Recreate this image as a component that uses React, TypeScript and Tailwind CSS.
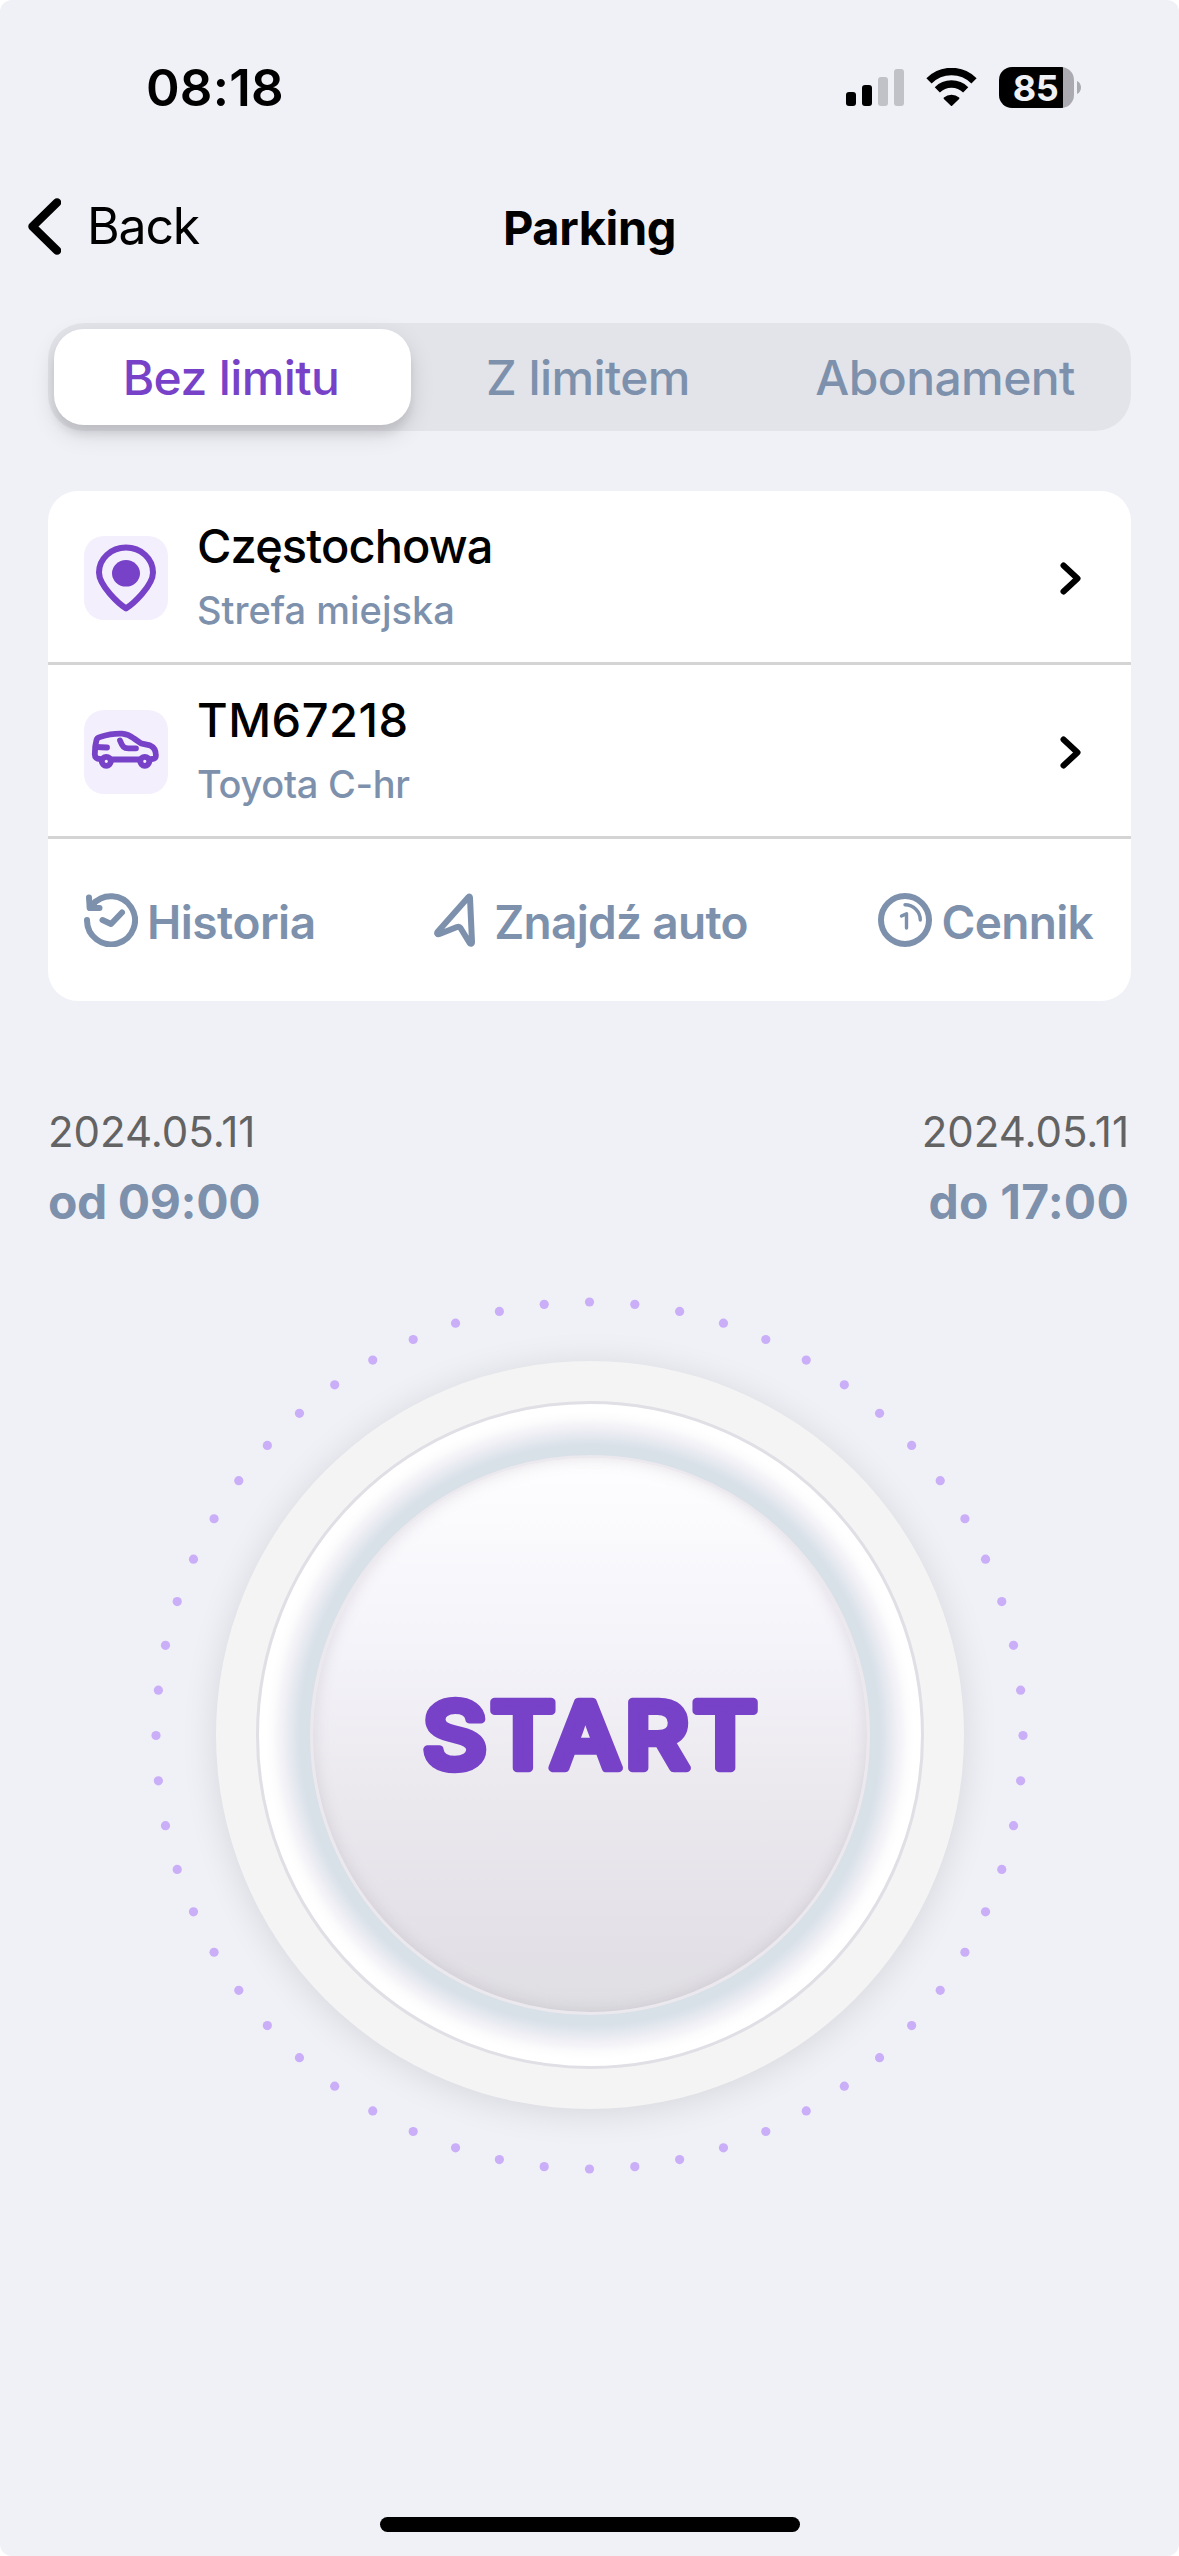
import { useState } from 'react';

const TABS = ['Bez limitu', 'Z limitem', 'Abonament'];

const TAB_CLASSES = [
  'w-[357px]',
  'flex-1',
  'w-[357px]',
];

const DOTS = Array.from({ length: 60 }, (_, i) => {
  const angle = (i * 6 * Math.PI) / 180;
  return { x: 439.5 + 433.5 * Math.sin(angle), y: 440.5 - 433.5 * Math.cos(angle) };
});

function StatusBar() {
  return (
    <div className="flex h-[134px] items-start justify-between pl-[146px] pr-[98px]">
      <span className="mt-[57px] text-[51px] leading-[61px] font-semibold tracking-[0.2px]">08:18</span>
      <div className="mt-[67px] flex h-[41px] items-start">
        <svg className="mt-[2px] h-[37px] w-[58px]" viewBox="0 0 58 37">
          <rect x="0" y="23" width="10" height="14" rx="3" />
          <rect x="16" y="16" width="10" height="21" rx="3" />
          <rect x="32" y="8" width="10" height="29" rx="3" fill="#c1c2c7" />
          <rect x="48" y="0" width="10" height="37" rx="3" fill="#c1c2c7" />
        </svg>
        <svg className="mt-[1px] ml-[22px] h-[38px] w-[51px]" viewBox="0 0 51 38">
          <path d="M3 12.8A31.8 31.8 0 0 1 48 12.8" fill="none" stroke="#000" strokeWidth="7.4" />
          <path d="M11.3 21.8A20.4 20.4 0 0 1 39.7 21.8" fill="none" stroke="#000" strokeWidth="7.4" />
          <path d="M17.9 29.6a11.2 11.2 0 0 1 15.2 0c.4.4.4.9 0 1.3l-7 6.8c-.4.4-.8.4-1.2 0l-7-6.8c-.4-.4-.4-.9 0-1.3z" />
        </svg>
        <div className="ml-[22px] flex h-[41px] w-[75px] items-center rounded-[13px] bg-[linear-gradient(to_right,#000_64px,#aaaab0_64px)]">
          <span className="w-[73px] text-center text-[36px] leading-[44px] font-bold tracking-[-0.5px] text-[#f0f1f6]">85</span>
        </div>
        <svg className="mt-[14px] ml-[3px] h-[13px] w-[4px]" viewBox="0 0 4 13">
          <path d="M0 0c2.500 1 4 3.600 4 6.500S2.500 12 0 13z" fill="#aaaab0" />
        </svg>
      </div>
    </div>
  );
}

function Chevron() {
  return (
    <svg className="mt-[4px] h-[33px] w-[21px]" viewBox="0 0 21 33" fill="none" stroke="#000" strokeWidth="6" strokeLinecap="round" strokeLinejoin="round">
      <path d="M3.500 3.500 17.500 16.500 3.500 29.500" />
    </svg>
  );
}

function PinIcon() {
  return (
    <svg className="h-[84px] w-[84px]" viewBox="0 0 84 84">
      <path d="M42 72.400C35.500 68.500 15 50 15 36.600a27 25 0 0 1 54 0C69 50 48.500 68.500 42 72.400z" fill="none" stroke="#7742c8" strokeWidth="6" strokeLinejoin="round" />
      <ellipse cx="42" cy="37.300" rx="14" ry="13.300" fill="#7742c8" />
    </svg>
  );
}

function CarIcon() {
  return (
    <svg className="h-[84px] w-[84px]" viewBox="0 0 84 84" fill="none" stroke="#7742c8" strokeWidth="5.800" strokeLinecap="round" strokeLinejoin="round">
      <path d="M16 49C12.500 49 10.800 47.500 10.800 44.500L11.200 36.500 12.500 30C13 28 14 27.500 16 27 24 24.500 31 23.400 38 23.700 43 24 46 25.500 50 28.500L57 33.300 66 35.300C70 37 71.900 40 71.900 45.500 71.900 47.500 71 48.700 68 49" />
      <path d="M28 49.500H55" />
      <path d="M12 37 23 37.500" />
      <path d="M36 30.500C38.500 37 40 38.300 44.500 38.300H52" />
      <circle cx="22.300" cy="51.300" r="4.500" />
      <circle cx="60.800" cy="51.300" r="4.500" />
    </svg>
  );
}

function HistoryIcon() {
  return (
    <svg className="h-[54px] w-[54px]" viewBox="0 0 54 54" fill="none" stroke="#7d91ad" strokeWidth="6" strokeLinecap="round" strokeLinejoin="round">
      <path d="M3 27A24 24 0 1 0 8.500 12" />
      <path d="M5 4.500 5.700 15H15.500" />
      <path d="M6 14 11 9" />
      <path d="M18.500 27 27 31 38 19.500" />
    </svg>
  );
}

function FindIcon() {
  return (
    <svg className="h-[54px] w-[42px]" viewBox="0 0 42 54" fill="none" stroke="#7d91ad" strokeWidth="6" strokeLinecap="round" strokeLinejoin="round">
      <path d="M34.500 4C35.500 3 36 3.500 36 5L38 49C38 51 36.500 51.500 35.500 49.700L26.500 35C25.500 33.500 24.700 33.300 23 34L5.500 41C3.500 41.700 2.500 40.500 3.700 38.800z" />
    </svg>
  );
}

function PriceIcon() {
  return (
    <svg className="h-[54px] w-[54px]" viewBox="0 0 54 54" fill="none" stroke="#7d91ad" strokeLinecap="round" strokeLinejoin="round">
      <circle cx="27" cy="27" r="24" strokeWidth="6" />
      <path d="M27 11.700A15.300 15.300 0 0 1 42.300 27" strokeWidth="3.400" />
      <path d="M23.500 23 28.500 20.800V35" strokeWidth="3.400" />
    </svg>
  );
}

type InfoRowProps = {
  icon: React.ReactNode;
  title: string;
  subtitle: string;
  titleClass: string;
  subtitleClass: string;
};

function InfoRow({ icon, title, subtitle, titleClass, subtitleClass }: InfoRowProps) {
  return (
    <button className="flex h-[174px] w-full items-center border-b-3 border-[#d4d4d4] pr-[50px] pl-9 text-left">
      <div className="mt-[3px] h-[84px] w-[84px] rounded-[20px] bg-[#f4effd]">{icon}</div>
      <div className="ml-[29px] flex-1">
        <p className={`text-[47px] leading-[58px] font-medium ${titleClass}`}>{title}</p>
        <p className={`mt-[12px] mb-[4px] text-[38px] leading-[46px] font-medium text-[#7d91ad] ${subtitleClass}`}>{subtitle}</p>
      </div>
      <Chevron />
    </button>
  );
}

function StartDial() {
  return (
    <div className="relative mx-auto mt-[65px] h-[880px] w-[880px]">
      <svg className="absolute inset-0 h-full w-full" viewBox="0 0 880 880">
        {DOTS.map((dot, i) => (
          <circle key={i} cx={dot.x} cy={dot.y} r="4.600" fill="#caaef8" />
        ))}
      </svg>
      <div className="flex h-full w-full items-center justify-center">
        <div className="flex h-[748px] w-[748px] items-center justify-center rounded-full bg-[#f4f4f4] shadow-[0_4px_36px_rgba(0,0,0,0.11)]">
          <div className="flex h-[668px] w-[668px] items-center justify-center rounded-full border-3 border-[#dfdfe5] bg-[radial-gradient(circle_closest-side,#d8e0e8_87.500%,#e1e6ed_89.500%,#efeff5_92.500%,#fcfcfd_96%,#fff_98%)]">
            <button className="flex h-[560px] w-[560px] items-center justify-center rounded-full border-3 border-[#ebe8ee] bg-[linear-gradient(to_bottom,#fefeff,#f4f3f9_35%,#ebe9ee_60%,#e4e1e8_85%,#dfdfe3)] shadow-[inset_0_0_16px_rgba(110,90,110,0.18)]">
              <svg className="h-[140px] w-[400px]" viewBox="0 0 400 140">
                <g transform="translate(202 103) scale(1.09 1)">
                  <text textAnchor="middle" fontSize="91" fontWeight="500" letterSpacing="3.500" fill="#7742c8" stroke="#7742c8" strokeWidth="8.500" strokeLinejoin="round">START</text>
                </g>
              </svg>
            </button>
          </div>
        </div>
      </div>
    </div>
  );
}

export default function App() {
  const [activeTab, setActiveTab] = useState(0);

  return (
    <div className="bg-white">
      <div className="flex h-[2556px] w-[1179px] flex-col overflow-hidden rounded-[12px] bg-[#f0f1f6] font-['Inter','Liberation_Sans',sans-serif] text-black">
        <StatusBar />

        <header className="grid h-[189px] grid-cols-3 items-start">
          <button className="flex items-center pt-[64px] pl-[28px]">
            <svg className="h-[57px] w-[33px]" viewBox="0 0 33 57" fill="none" stroke="#000" strokeWidth="8.500" strokeLinecap="round" strokeLinejoin="round">
              <path d="M29 4.500 4.500 28.500 29 52.500" />
            </svg>
            <span className="ml-[26px] text-[50px] leading-[57px] tracking-[-1.2px]">Back</span>
          </button>
          <h1 className="pt-[64px] text-center text-[47px] leading-[60px] font-bold tracking-[-0.4px]">Parking</h1>
        </header>

        <div className="mx-12 flex h-[108px] rounded-[36px] bg-[#e3e4ea] p-[6px]">
          {TABS.map((tab, i) => (
            <button
              key={tab}
              onClick={() => setActiveTab(i)}
              className={`${TAB_CLASSES[i]} rounded-[30px] pt-[2px] pr-[3px] text-[48px] font-medium tracking-[-0.6px] ${
                activeTab === i
                  ? 'bg-white text-[#7742c8] shadow-[0_9px_24px_rgba(0,0,0,0.12),0_9px_9px_rgba(0,0,0,0.08)]'
                  : 'text-[#7d91ad]'
              }`}
            >
              {tab}
            </button>
          ))}
        </div>

        <section className="mx-12 mt-[60px] h-[510px] overflow-hidden rounded-[30px] bg-white">
          <InfoRow
            icon={<PinIcon />}
            title="Częstochowa"
            subtitle="Strefa miejska"
            titleClass="tracking-[-0.9px]"
            subtitleClass="tracking-[0px]"
          />
          <InfoRow
            icon={<CarIcon />}
            title="TM67218"
            subtitle="Toyota C-hr"
            titleClass="tracking-[0.5px]"
            subtitleClass="tracking-[-0.3px]"
          />
          <div className="flex h-[162px] items-center justify-between pr-[38px] pl-9 text-[46px] leading-[56px] font-semibold tracking-[-0.7px] text-[#7d91ad]">
            <button className="flex items-center gap-[9px]">
              <HistoryIcon />
              <span className="mt-[3px] tracking-[-0.5px]">Historia</span>
            </button>
            <button className="mr-[11px] flex items-center gap-[18px]">
              <FindIcon />
              <span className="mt-[3px]">Znajdź auto</span>
            </button>
            <button className="flex items-center gap-[10px]">
              <PriceIcon />
              <span className="mt-[3px]">Cennik</span>
            </button>
          </div>
        </section>

        <div className="mx-12 mt-[105px] flex justify-between">
          <div>
            <p className="text-[42px] leading-[52px] text-[#636363]">2024.05.11</p>
            <p className="mt-[15px] text-[48px] leading-[57px] font-bold tracking-[-0.4px] text-[#7d91ad]">od 09:00</p>
          </div>
          <div className="pr-[2px] text-right">
            <p className="text-[42px] leading-[52px] text-[#636363]">2024.05.11</p>
            <p className="mt-[15px] text-[48px] leading-[57px] font-bold tracking-[0.2px] text-[#7d91ad]">do 17:00</p>
          </div>
        </div>

        <StartDial />

        <div className="mx-auto mt-auto mb-[24px] h-[15px] w-[420px] shrink-0 rounded-full bg-black" />
      </div>
    </div>
  );
}
